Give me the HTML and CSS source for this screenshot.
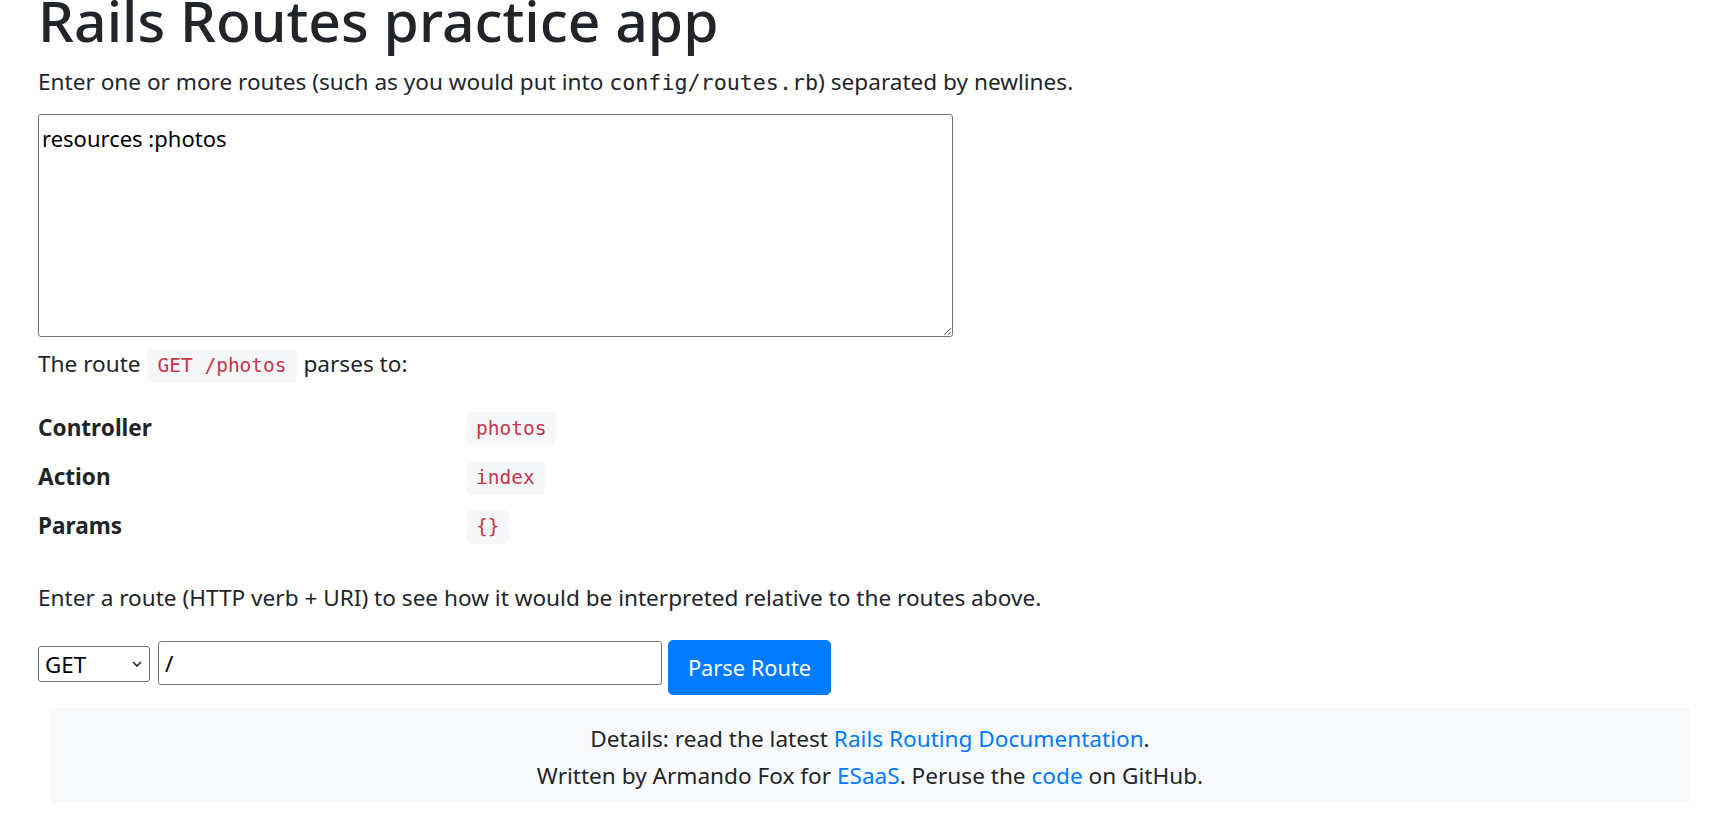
FILE: index.html
```html
<!DOCTYPE html>
<html lang="en">
<head>
<meta charset="utf-8">
<title>Rails Routes practice app</title>
<link rel="stylesheet" href="styles.css">
</head>
<body>
<main class="page">
  <h1 class="title">Rails Routes practice app</h1>
  <p class="intro">Enter one or more routes (such as you would put into <code class="inline-code">config/routes.rb</code>) separated by newlines.</p>
  <textarea class="routes-input">resources :photos</textarea>
  <p class="parse-line">The route <code class="chip">GET /photos</code> parses to:</p>
  <div class="result">
    <div class="result-label">Controller</div>
    <div class="result-value"><code class="chip">photos</code></div>
    <div class="result-label">Action</div>
    <div class="result-value"><code class="chip">index</code></div>
    <div class="result-label">Params</div>
    <div class="result-value"><code class="chip">{}</code></div>
  </div>
  <p class="hint">Enter a route (HTTP verb + URI) to see how it would be interpreted relative to the routes above.</p>
  <form class="route-form">
    <div class="select-wrap">
      <select class="verb">
        <option>GET</option>
        <option>POST</option>
        <option>PUT</option>
        <option>PATCH</option>
        <option>DELETE</option>
      </select>
      <svg class="chevron" width="10" height="6" viewBox="0 0 10 6"><path d="M1 1l4 4 4-4" fill="none" stroke="#222" stroke-width="1.6"/></svg>
    </div>
    <input class="uri" type="text" value="/">
    <button class="btn-parse" type="button">Parse Route</button>
  </form>
</main>
<footer class="footer">
  <p class="footer-line">Details: read the latest <a href="#">Rails Routing Documentation</a>.</p>
  <p class="footer-line">Written by Armando Fox for <a href="#">ESaaS</a>. Peruse the <a href="#">code</a> on GitHub.</p>
</footer>
</body>
</html>
```

FILE: styles.css
```css
html, body {
  margin: 0;
  padding: 0;
  background: #fff;
}

body {
  font-family: "Noto Sans", "Open Sans", sans-serif;
  font-size: 22.6px;
  line-height: 34px;
  color: #212529;
}

.page {
  padding-left: 38px;
}

.title {
  margin: -8px 0 0;
  font-size: 57px;
  line-height: 57px;
  font-weight: 500;
  color: #212529;
}

.intro {
  margin: 16px 0 0;
}

.inline-code {
  font-family: "DejaVu Sans Mono", monospace;
  font-size: 21.7px;
  color: #212529;
}

.routes-input {
  display: block;
  box-sizing: border-box;
  width: 915px;
  height: 223px;
  margin: 14px 0 0;
  padding: 10px 3px 4px;
  border: 1px solid #767676;
  border-radius: 3px;
  font-family: "Noto Sans", "Open Sans", sans-serif;
  font-size: 22px;
  line-height: 26px;
  color: #000;
}

.parse-line {
  margin: 10px 0 0;
  line-height: 34px;
}

.chip {
  display: inline-block;
  margin: 0 1px;
  padding: 6px 10px;
  font-family: "DejaVu Sans Mono", monospace;
  font-size: 19.5px;
  line-height: 22px;
  color: #c7354a;
  background: #f6f7f9;
  border-radius: 6px;
}

.result {
  display: grid;
  grid-template-columns: 428px auto;
  grid-auto-rows: 49px;
  align-items: center;
  margin-top: 20px;
}

.result-label {
  font-weight: 700;
}

.result-value .chip {
  margin: 0;
}

.hint {
  margin: 31px 0 0;
}

.route-form {
  display: flex;
  align-items: flex-start;
  margin: 25px 0 0;
}

.select-wrap {
  position: relative;
  margin-top: 6px;
}

.verb {
  appearance: none;
  -webkit-appearance: none;
  box-sizing: border-box;
  width: 112px;
  height: 36px;
  padding: 0 0 0 6px;
  border: 1px solid #767676;
  border-radius: 3px;
  background: #fff;
  font-family: "Noto Sans", "Open Sans", sans-serif;
  font-size: 22.3px;
  color: #000;
}

.chevron {
  position: absolute;
  right: 8px;
  top: 15px;
  pointer-events: none;
}

.uri {
  box-sizing: border-box;
  width: 504px;
  height: 44px;
  margin: 1px 0 0 8px;
  padding: 0 6px;
  border: 1px solid #767676;
  border-radius: 3px;
  font-family: "Noto Sans", "Open Sans", sans-serif;
  font-size: 22.3px;
  color: #000;
}

.btn-parse {
  box-sizing: border-box;
  width: 163px;
  height: 55px;
  margin-left: 6px;
  padding: 0;
  border: 1px solid #007bff;
  border-radius: 5px;
  background: #007bff;
  color: #fff;
  font-family: "Noto Sans", "Open Sans", sans-serif;
  font-size: 21.8px;
  cursor: pointer;
}

.footer {
  margin: 13px 31px 0 50px;
  padding: 12px 0 9px;
  background: #f8f9fa;
  text-align: center;
}

.footer-line {
  margin: 0;
  line-height: 37px;
}

.footer a {
  color: #007bff;
  text-decoration: none;
}
```
